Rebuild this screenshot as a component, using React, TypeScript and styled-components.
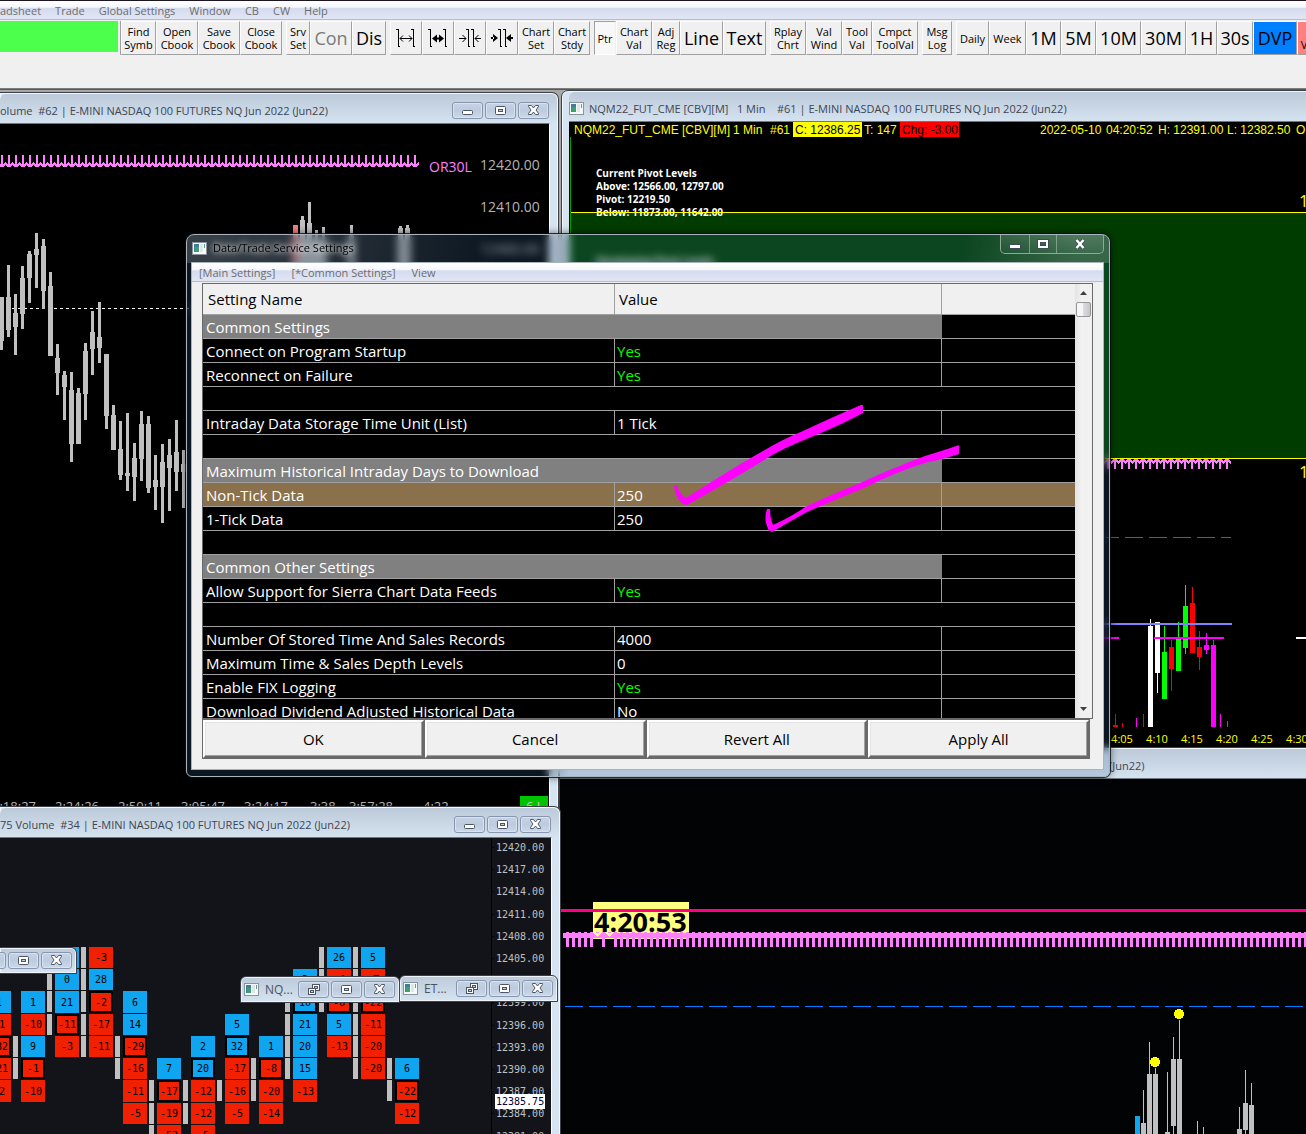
import React from "react";
import styled, { createGlobalStyle, css } from "styled-components";

const ui = `"Open Sans", "Noto Sans", sans-serif`;
const mono = `"DejaVu Sans Mono", "Liberation Mono", monospace`;
const arial = `"Liberation Sans", Arial, sans-serif`;

const GlobalStyle = createGlobalStyle`
  *, *::before, *::after { box-sizing: border-box; }
  body { margin: 0; background: #a7a7a7; font-family: ${ui}; font-size: 11px; }
  button { font: inherit; margin: 0; padding: 0; cursor: default; }
`;

/* ---------- Application shell ---------- */

const Shell = styled.main`
  display: flex;
  flex-direction: column;
  height: 100vh;
  overflow: hidden;
`;

const MenuBar = styled.nav<{ $inDialog?: boolean }>`
  display: flex;
  flex: none;
  align-items: center;
  gap: ${(p) => (p.$inDialog ? 16 : 14)}px;
  height: ${(p) => (p.$inDialog ? 19 : 20)}px;
  padding-left: ${(p) => (p.$inDialog ? 7 : 0)}px;
  padding-top: ${(p) => (p.$inDialog ? 0 : 1)}px;
  border-top: 1px solid ${(p) => (p.$inDialog ? "#ffffff" : "#1c1620")};
  border-bottom: 1px solid #b6bccc;
  background: linear-gradient(#ffffff 0, #f4f6fb 35%, #d5dbee 40%, #e1e6f6 100%);
`;

const MenuItem = styled.button`
  border: 0;
  background: none;
  color: #6d6d6d;
  font-size: 11px;
  line-height: 16px;
  white-space: nowrap;
`;

const Toolbar = styled.div`
  display: flex;
  flex: none;
  gap: 4px;
  height: 68px;
  padding-top: 1px;
  background: #f0f0f0;
  overflow: hidden;
`;

const StatusLight = styled.div`
  width: 118px;
  height: 31px;
  margin-right: -2px;
  flex: none;
  background: #4dff4d;
`;

const ToolGroup = styled.div<{ $first?: boolean }>`
  display: flex;
  flex: none;
  height: 34px;
  border-left: ${(p) => (p.$first ? "1px solid #a0a0a0" : "0")};
`;

const ToolButton = styled.button<{ $w: number; $big?: boolean; $tone?: string; $pressed?: boolean }>`
  width: ${(p) => p.$w}px;
  height: 34px;
  display: flex;
  align-items: center;
  justify-content: center;
  text-align: center;
  white-space: pre;
  overflow: hidden;
  font-size: ${(p) => (p.$big ? 18 : 11)}px;
  line-height: ${(p) => (p.$big ? 24 : 13)}px;
  color: #000;
  background: ${(p) => p.$tone ?? (p.$pressed ? "#f8f8f8" : "#f0f0f0")};
  border: 1px solid;
  border-color: ${(p) => (p.$pressed ? "#a0a0a0 #f0f0f0 #ffffff #a0a0a0" : "#fdfdfd #a0a0a0 #a0a0a0 #fdfdfd")};
  &:disabled { color: #7a7a7a; }
`;

const Desktop = styled.section`
  position: relative;
  flex: 1;
  overflow: hidden;
  border-top: 1px solid #7c7c7c;
  background: #a7a7a7;
  box-shadow: inset 0 1px 0 #5a5a5a;
`;

/* ---------- Chart windows ---------- */

type Box = { $x: number; $y: number; $w?: number; $h?: number };

const place = css<Box>`
  position: absolute;
  left: ${(p) => p.$x}px;
  top: ${(p) => p.$y - 89}px;
  ${(p) => (p.$w ? `width: ${p.$w}px;` : "right: -10px;")}
  ${(p) => (p.$h ? `height: ${p.$h}px;` : "bottom: -10px;")}
`;

const Frame = styled.article<Box & { $cutLeft?: boolean; $flush?: boolean }>`
  ${place}
  display: flex;
  flex-direction: column;
  border: 1px solid #3d4046;
  border-radius: ${(p) => (p.$cutLeft ? "0 7px 0 0" : "7px 7px 0 0")};
  padding: 0 ${(p) => (p.$flush ? 0 : 8)}px 0 ${(p) => (p.$cutLeft || p.$flush ? 0 : 7)}px;
  background: #d6e3f1;
  box-shadow: inset 0 0 0 1px #f2f7fc;
  ${(p) => p.$cutLeft && "border-left: 0;"}
`;

const TitleBar = styled.header`
  display: flex;
  flex: none;
  align-items: center;
  height: 30px;
  margin: 1px -7px -1px 0;
  padding: 2px 8px 0 0;
  color: #3c4652;
  background: linear-gradient(#bccad9, #d6e3f1);
  border-radius: 6px 6px 0 0;
`;

const Title = styled.h2<{ $indent?: number }>`
  flex: 1;
  margin: 0 0 0 ${(p) => p.$indent ?? 0}px;
  padding-top: 1px;
  font-size: 11px;
  line-height: 16px;
  font-weight: 400;
  white-space: pre;
`;

const Captions = styled.div`
  display: flex;
  gap: 2px;
`;

const CaptionButton = styled.button`
  display: grid;
  place-items: center;
  width: 31px;
  height: 17px;
  border: 1px solid #8796ae;
  border-radius: 3px;
  background: linear-gradient(#c6d3e3, #bccbdf 50%, #cbd9e9);
  box-shadow: inset 0 0 0 1px #d8e3f0;
`;

const Client = styled.div<{ $bg?: string }>`
  flex: 1;
  min-height: 0;
  border: solid;
  border-width: 1px 1px 0 0;
  border-color: #6f7780 #ffffff;
  background: ${(p) => p.$bg ?? "#000"};
`;

const Canvas = styled.svg<{ $font?: string }>`
  display: block;
  width: 100%;
  height: 100%;
  overflow: hidden;
  font-family: ${(p) => p.$font ?? ui};
`;

const MiniFrame = styled.article<Box & { $cutLeft?: boolean }>`
  ${place}
  display: flex;
  align-items: center;
  justify-content: flex-end;
  gap: 2px;
  padding: 0 4px 1px 3px;
  border: 1px solid #3d4046;
  border-radius: ${(p) => (p.$cutLeft ? "0 6px 0 0" : "6px 6px 0 0")};
  ${(p) => p.$cutLeft && "border-left: 0;"}
  background: linear-gradient(#bccad9, #d6e3f1);
  box-shadow: inset 0 0 0 1px #eef4fa;
  color: #4a545f;
`;

const MiniTitle = styled.h2`
  flex: 1;
  margin: 0 0 0 4px;
  padding-top: 2px;
  font-size: 12px;
  line-height: 16px;
  font-weight: 400;
`;

/* ---------- Dialog ---------- */

const Glass = styled.section<Box>`
  ${place}
  display: flex;
  flex-direction: column;
  padding: 0 5px 6px 4px;
  border: 1px solid #a9b3bb;
  border-radius: 8px 8px 6px 6px;
  background:
    linear-gradient(100deg, rgba(255, 255, 255, 0.18) 0, rgba(255, 255, 255, 0.13) 12%, rgba(255, 255, 255, 0) 34%) 0 0 / 100% 28px no-repeat,
    linear-gradient(100deg, rgba(255, 255, 255, 0) 84%, rgba(255, 255, 255, 0.18) 96%) 0 0 / 100% 28px no-repeat,
    rgba(60, 110, 160, 0.2);
  backdrop-filter: blur(4px);
  box-shadow: 0 0 0 1px rgba(10, 14, 20, 0.8), 0 0 8px rgba(0, 0, 0, 0.6);
`;

const GlassTitle = styled.header`
  display: flex;
  flex: none;
  align-items: flex-start;
  height: 27px;
  padding-left: 1px;
`;

const GlassLabel = styled.div`
  display: flex;
  flex: 1;
  align-items: center;
  gap: 6px;
  height: 26px;
`;

const GlassText = styled.h1`
  margin: 0;
  font-size: 11px;
  line-height: 16px;
  font-weight: 400;
  color: #000;
  text-shadow: 0 0 6px rgba(255, 255, 255, 0.8), 0 0 10px rgba(255, 255, 255, 0.7), 0 0 4px rgba(255, 255, 255, 0.5);
`;

const GlassCaptions = styled.div`
  display: flex;
  height: 19px;
  border: 1px solid #8fa898;
  border-top: 0;
  border-radius: 0 0 5px 5px;
  overflow: hidden;
`;

const GlassButton = styled.button<{ $w: number }>`
  display: grid;
  place-items: center;
  width: ${(p) => p.$w}px;
  border: 0;
  border-left: 1px solid rgba(170, 195, 178, 0.6);
  background: linear-gradient(rgba(255, 255, 255, 0.12), rgba(255, 255, 255, 0.02));
  &:first-child { border-left: 0; }
`;

const DialogBody = styled.div`
  display: flex;
  flex: 1;
  flex-direction: column;
  min-height: 0;
  border: 1px solid #a9b3bb;
  background: #f0f0f0;
`;

const Grid = styled.div`
  display: flex;
  flex: 1;
  min-height: 0;
  margin: 1px 10px 0;
  border: 1px solid #696969;
  background: #000;
`;

const TableView = styled.div`
  flex: 1;
  min-width: 0;
  overflow: hidden;
`;

const Table = styled.table`
  width: 100%;
  table-layout: fixed;
  border-collapse: separate;
  border-spacing: 0;
  color: #fff;
  font-size: 15px;
  line-height: 20px;
  text-align: left;
`;

const NameCol = styled.col`width: 412px;`;
const ValueCol = styled.col`width: 327px;`;

const Th = styled.th`
  height: 31px;
  padding: 0 4px;
  border-right: 1px solid #a0a0a0;
  border-bottom: 1px solid #a0a0a0;
  background: #f0f0f0;
  color: #000;
  font-weight: 400;
  &:first-child { padding-left: 5px; }
  &:last-child { border-right: 0; }
`;

const Td = styled.td<{ $fill?: string; $green?: boolean; $plain?: boolean }>`
  height: 24px;
  padding: 0 2px;
  border-right: ${(p) => (p.$plain ? "0" : "1px solid #a0a0a0")};
  border-bottom: 1px solid #a0a0a0;
  background: ${(p) => p.$fill ?? "#000"};
  color: ${(p) => (p.$green ? "#00ff00" : "#fff")};
  white-space: nowrap;
  &:first-child { padding-left: 3px; }
  &:last-child { border-right: 0; }
`;

const ScrollBar = styled.div`
  display: flex;
  flex: none;
  flex-direction: column;
  width: 17px;
  align-items: center;
  background: linear-gradient(90deg, #e4e4e4, #f2f2f2 40%, #f0f0f0);
`;

const ScrollArrow = styled.button`
  display: grid;
  place-items: center;
  width: 17px;
  height: 18px;
  border: 0;
  background: none;
`;

const Thumb = styled.div`
  width: 15px;
  height: 15px;
  margin-bottom: auto;
  border: 1px solid #979797;
  border-radius: 2px;
  background: linear-gradient(90deg, #f6f6f6 45%, #dcdce0 50%, #c4c4ca);
`;

const DialogActions = styled.div`
  display: grid;
  grid-template-columns: repeat(4, 1fr);
  flex: none;
  height: 40px;
  margin: 0 13px 10px 10px;
  border: 1px solid #696969;
  background: #696969;
  column-gap: 1px;
`;

const ActionButton = styled.button`
  border: 2px solid;
  border-color: #ffffff #696969 #696969 #ffffff;
  background: #f0f0f0;
  box-shadow: inset -1px -1px 0 #a0a0a0, inset 1px 1px 0 #e3e3e3;
  color: #000;
  font-size: 15px;
  line-height: 20px;
`;

const InkLayer = styled.svg`
  position: absolute;
  left: 0;
  top: 0;
  width: 100%;
  height: 100%;
  pointer-events: none;
`;

/* ---------- Icons ---------- */

const AppIcon = () => (
  <svg width="15" height="13" viewBox="0 0 15 13" shapeRendering="crispEdges" aria-hidden="true">
    <rect x="0" y="0" width="15" height="13" fill="#8b949b" />
    <rect x="1" y="1" width="13" height="11" fill="#f7fafa" />
    <rect x="2" y="2" width="5" height="8" fill="#3f7f9c" />
    <rect x="3" y="5" width="4" height="5" fill="#3fa06f" />
    <rect x="8" y="2" width="3" height="8" fill="#dfe6e6" />
    <rect x="12" y="2" width="1" height="4" fill="#5f96a8" />
  </svg>
);

const MinIcon = () => (
  <svg width="13" height="9" viewBox="0 0 13 9" aria-hidden="true">
    <rect x="1.5" y="4.5" width="10" height="4" rx="1" fill="#fff" stroke="#4c5564" />
  </svg>
);
const MaxIcon = () => (
  <svg width="11" height="9" viewBox="0 0 11 9" aria-hidden="true">
    <rect x="0.5" y="0.5" width="10" height="8" rx="1" fill="#fff" stroke="#4c5564" />
    <rect x="3.5" y="3.5" width="4" height="2" fill="#c2d0e0" stroke="#4c5564" />
  </svg>
);
const RestoreIcon = () => (
  <svg width="12" height="11" viewBox="0 0 12 11" aria-hidden="true">
    <rect x="4.5" y="0.5" width="7" height="6" fill="#fff" stroke="#4c5564" />
    <rect x="6.5" y="2.5" width="3" height="2" fill="#c2d0e0" stroke="#4c5564" />
    <rect x="0.5" y="4.5" width="7" height="6" fill="#fff" stroke="#4c5564" />
    <rect x="2.5" y="6.5" width="3" height="2" fill="#c2d0e0" stroke="#4c5564" />
  </svg>
);
const CloseIcon = () => (
  <svg width="13" height="10" viewBox="0 0 13 10" aria-hidden="true">
    <path d="M1.500 .5h3l2 2.500 2-2.500h3v1l-2.500 3.500 2.500 3.500v1h-3l-2-2.500-2 2.500h-3v-1l2.500-3.500-2.500-3.500z" fill="#fff" stroke="#4c5564" />
  </svg>
);

const Spacing = ({ inward, bold }: { inward?: boolean; bold?: boolean }) => (
  <svg width="24" height="22" viewBox="0 0 24 22" fill="none" stroke="#000" aria-hidden="true">
    {inward ? (
      <>
        <path d="M8 2.500h2.500v17M10 19.500h2M13 2.500h2.500v17M15 19.500h2" shapeRendering="crispEdges" />
        {bold ? (
          <path d="M3 7v8l5-4zM21 7v8l-5-4zM1 10h3v2h-3zM20 10h3v2h-3z" fill="#000" stroke="none" />
        ) : (
          <path d="M1 11.500h7M4.500 8l3.500 3.500-3.500 3.500M23 11.500h-6M20.500 8l-3.500 3.500 3.500 3.500" />
        )}
      </>
    ) : (
      <>
        <path d="M2 2.500h2.500v17M4 19.500h2M17 2.500h2.500v17M19 19.500h2" shapeRendering="crispEdges" />
        {bold ? (
          <path d="M6 11.500l5-4v3h2v-3l5 4-5 4v-3h-2v3z" fill="#000" stroke="none" />
        ) : (
          <path d="M6 11.500h12M9 8.500l-3 3 3 3M15 8.500l3 3-3 3" />
        )}
      </>
    )}
  </svg>
);

const WindowButtons = ({ restore }: { restore?: boolean }) => (
  <Captions>
    <CaptionButton aria-label={restore ? "Restore" : "Minimize"}>{restore ? <RestoreIcon /> : <MinIcon />}</CaptionButton>
    <CaptionButton aria-label="Maximize"><MaxIcon /></CaptionButton>
    <CaptionButton aria-label="Close"><CloseIcon /></CaptionButton>
  </Captions>
);

/* ---------- Toolbar data ---------- */

type Tool = { t?: string; w: number; big?: boolean; off?: boolean; tone?: string; down?: boolean; icon?: [boolean, boolean]; label?: string };

const toolGroups: Tool[][] = [
  [{ t: "Find\nSymb", w: 35 }, { t: "Open\nCbook", w: 42 }, { t: "Save\nCbook", w: 42 }, { t: "Close\nCbook", w: 42 }],
  [{ t: "Srv\nSet", w: 24 }, { t: "Con", w: 42, big: true, off: true }, { t: "Dis", w: 34, big: true }],
  [
    { w: 32, icon: [false, false], label: "Increase bar spacing" },
    { w: 32, icon: [false, true], label: "Increase bar width" },
    { w: 32, icon: [true, false], label: "Decrease bar spacing" },
    { w: 32, icon: [true, true], label: "Decrease bar width" },
    { t: "Chart\nSet", w: 36 },
    { t: "Chart\nStdy", w: 36 },
  ],
  [{ t: "Ptr", w: 22, down: true }, { t: "Chart\nVal", w: 36 }, { t: "Adj\nReg", w: 28 }, { t: "Line", w: 43, big: true }, { t: "Text", w: 43, big: true }],
  [{ t: "Rplay\nChrt", w: 36 }, { t: "Val\nWind", w: 36 }, { t: "Tool\nVal", w: 30 }, { t: "Cmpct\nToolVal", w: 46 }],
  [{ t: "Msg\nLog", w: 30 }],
  [
    { t: "Daily", w: 33 }, { t: "Week", w: 37 },
    { t: "1M", w: 35, big: true }, { t: "5M", w: 35, big: true }, { t: "10M", w: 45, big: true }, { t: "30M", w: 45, big: true },
    { t: "1H", w: 31, big: true }, { t: "30s", w: 36, big: true }, { t: "DVP", w: 44, big: true, tone: "#0080ff" },
    { t: " \nV", w: 14, tone: "#ff8080" },
  ],
];

/* ---------- Chart data ---------- */

// [wick top, wick bottom, body top, body bottom], one bar every 7px
const volumeBars = [
  [297, 350, 297, 341], [265, 337, 297, 330], [294, 355, 313, 327], [266, 329, 278, 314], [251, 303, 254, 278],
  [233, 288, 249, 255], [239, 309, 246, 291], [272, 356, 286, 356], [344, 395, 358, 373], [371, 420, 375, 387],
  [372, 462, 390, 444], [388, 444, 393, 444], [343, 420, 351, 394], [311, 375, 332, 349], [302, 363, 337, 348],
  [354, 429, 354, 416], [405, 450, 415, 450], [421, 480, 449, 475], [413, 491, 473, 476], [443, 501, 458, 477],
  [411, 481, 424, 459], [416, 493, 424, 488], [455, 510, 480, 487], [444, 523, 462, 487], [439, 511, 455, 468],
  [420, 491, 452, 472], [450, 508, 464, 472],
];
const peakBars: [number, number, number, string][] = [
  [42, 225, 225, "#f08080"], [43, 216, 220, "#c0c0c0"], [44, 202, 223, "#c0c0c0"], [45, 230, 242, "#c0c0c0"],
  [46, 227, 240, "#c0c0c0"], [50, 225, 236, "#c0c0c0"], [57, 226, 228, "#c0c0c0"], [58, 225, 228, "#c0c0c0"],
];
const volumeTimes: [number, string][] = [
  [-8, "2:18:27"], [55, "2:24:26"], [118, "2:50:11"], [181, "3:05:47"], [244, "3:24:17"], [310, "3:38"], [349, "3:57:28"], [423, "4:22"],
];

const VolumeChart = () => (
  <Canvas shapeRendering="crispEdges">
    <g transform="translate(0 -124)">
      <line x1="0" x2="560" y1="308.500" y2="308.500" stroke="#fff" strokeDasharray="3 3" />
      {volumeBars.map(([a, b, c, d], i) => (
        <g key={i} fill="#c0c0c0">
          <rect x={i * 7} y={a} width="3" height={b - a} />
          <rect x={i * 7 - 1} y={c} width="5" height={d - c} />
        </g>
      ))}
      {peakBars.map(([i, a, c, fill]) => (
        <g key={i} fill={fill}>
          <rect x={i * 7} y={a} width="3" height={270 - a} />
          <rect x={i * 7 - 1} y={c} width="5" height={270 - c} />
        </g>
      ))}
      {Array.from({ length: 60 }, (_, i) => (
        <g key={i}>
          <rect x={i * 7 + 1} y="155" width="2" height="11" fill="#ff80ff" />
          <path d={`M${i * 7 - 2} 163l4 3.500 4-3.500`} fill="none" stroke="#ff80ff" strokeWidth="2" />
        </g>
      ))}
      <text x="429" y="172" fontSize="14" fill="#ff80ff">OR30L</text>
      {["12420.00", "12410.00", "12400.00"].map((t, i) => (
        <text key={t} x="480" y={170 + i * 42} fontSize="14" fill="#b4b4b4">{t}</text>
      ))}
      {volumeTimes.map(([x, t]) => (
        <text key={x} x={x} y="811" fontSize="13" fill="#b4b4b4">{t}</text>
      ))}
      <rect x="520" y="796" width="28" height="16" fill="#00c400" />
      <text x="526" y="811" fontSize="13" fill="#c8c8c8">6 J</text>
    </g>
  </Canvas>
);

const LIME = "#00ff00", RED = "#ff0000", MAG = "#ff00ff", WHITE = "#ffffff";
// [x, wick top, wick bottom, body top, body bottom, colour]
const minuteBars: [number, number, number, number, number, string][] = [
  [1115, 714, 727, 725, 727, RED], [1122, 723, 727, 0, 0, RED], [1136, 718, 727, 0, 0, MAG], [1143, 714, 727, 0, 0, RED],
  [1150, 619, 727, 626, 727, WHITE], [1157, 622, 693, 622, 673, WHITE], [1164, 626, 699, 652, 699, LIME],
  [1171, 640, 691, 647, 669, RED], [1178, 622, 671, 639, 671, LIME], [1185, 585, 654, 606, 648, LIME],
  [1192, 587, 653, 603, 653, RED], [1199, 631, 670, 647, 657, RED], [1206, 633, 654, 645, 650, MAG],
  [1213, 640, 727, 645, 727, MAG], [1220, 714, 727, 0, 0, MAG], [1227, 721, 727, 0, 0, MAG],
];

const MinuteChart = () => (
  <Canvas shapeRendering="crispEdges">
    <g transform="translate(-569 -122)">
      <g fontFamily={arial} fontSize="12" fill="#ffff00">
        <text x="574" y="134">NQM22_FUT_CME [CBV][M]</text>
        <text x="733" y="134">1 Min</text>
        <text x="770" y="134">#61</text>
        <rect x="793" y="122" width="69" height="15" />
        <text x="795" y="134" fill="#000">C: 12386.25</text>
        <text x="864" y="134">T: 147</text>
        <rect x="900" y="122" width="59" height="15" fill="#ff0000" />
        <text x="902" y="134" fill="#000">Chg: -3.00</text>
        <text x="1040" y="134">2022-05-10</text>
        <text x="1106" y="134">04:20:52</text>
        <text x="1158" y="134">H: 12391.00</text>
        <text x="1227" y="134">L: 12382.50</text>
        <text x="1296" y="134">O</text>
      </g>
      <rect x="570" y="213" width="800" height="245" fill="#003c00" />
      <rect x="570" y="137" width="1" height="600" fill="#00a000" />
      <g fill="#fff" fontSize="10" fontWeight="700">
        <text x="596" y="177">Current Pivot Levels</text>
        <text x="596" y="190">Above: 12566.00, 12797.00</text>
        <text x="596" y="203">Pivot: 12219.50</text>
        <text x="596" y="216">Below: 11873.00, 11642.00</text>
        <text x="596" y="265">Developing Pivot Levels</text>
      </g>
      <rect x="571" y="212" width="800" height="1" fill="#ffff00" />
      <rect x="571" y="458" width="800" height="1" fill="#ffff00" />
      <g fill="#ffff00" fontSize="17">
        <text x="1299" y="207">1</text>
        <text x="1299" y="478">1</text>
      </g>
      {Array.from({ length: 18 }, (_, i) => (
        <g key={i}>
          <rect x={1107 + i * 7} y="459" width="2" height="10" fill="#ff80ff" />
          <path d={`M${1104 + i * 7} 463l4-3.500 4 3.500`} fill="none" stroke="#ff80ff" strokeWidth="2" />
        </g>
      ))}
      <line x1="1101" x2="1231" y1="537.500" y2="537.500" stroke="#0a6fe0" strokeDasharray="18 6" />
      <rect x="1100" y="637" width="19" height="2" fill={MAG} />
      {minuteBars.map(([x, a, b, c, d, fill]) => (
        <g key={x} fill={fill}>
          <rect x={x} y={a} width="1" height={b - a} />
          <rect x={x - 2} y={c} width="5" height={d - c} />
        </g>
      ))}
      <rect x="1100" y="623" width="132" height="2" fill="#8080ff" />
      <rect x="1154" y="637" width="70" height="2" fill={MAG} />
      <rect x="1296" y="637" width="40" height="2" fill="#fff" />
      {["4:05", "4:10", "4:15", "4:20", "4:25", "4:30"].map((t, i) => (
        <text key={t} x={1122 + i * 35} y="743" fontSize="11" textAnchor="middle" fill="#ffff00">{t}</text>
      ))}
    </g>
  </Canvas>
);

// [x, wick top, body top, body bottom]
const sessionBars: [number, number, number, number][] = [
  [1143, 1090, 1123, 1150], [1149, 1042, 1074, 1150], [1155, 1068, 1074, 1150], [1167, 1072, 1132, 1150],
  [1173, 1037, 1059, 1126], [1179, 1020, 1059, 1150], [1197, 1121, 1150, 1150], [1203, 1127, 1150, 1150],
  [1239, 1107, 1129, 1150], [1245, 1070, 1103, 1130], [1251, 1083, 1105, 1150],
];

const SessionChart = () => (
  <Canvas shapeRendering="crispEdges">
    <g transform="translate(-560 -779)">
      <rect x="593" y="902" width="96" height="37" fill="#ffff80" />
      <text x="594" y="932" fontSize="27" fontWeight="700" fill="#000">4:20:53</text>
      <rect x="560" y="909" width="800" height="3" fill="#ff0080" />
      <rect x="563" y="933" width="800" height="5" fill="#ff80ff" />
      {Array.from({ length: 126 }, (_, i) => (
        <g key={i} fill="#ff80ff">
          <rect x={566 + i * 6} y="932" width="3" height="1" />
          {i !== 5 && i !== 7 && <rect x={566 + i * 6} y="938" width="3" height="9" />}
          {(i === 5 || i === 7) && <path d={`M${563 + i * 6} 933h8l-4 4z`} fill="#ffff80" />}
        </g>
      ))}
      <line x1="565" x2="1400" y1="1006.500" y2="1006.500" stroke="#0a7cff" strokeDasharray="18 6" />
      <rect x="1135" y="1116" width="5" height="40" fill="#10a5f0" />
      {sessionBars.map(([x, a, c, d]) => (
        <g key={x} fill="#c0c0c0">
          <rect x={x} y={a} width="1" height={1150 - a} />
          <rect x={x - 2} y={c} width="5" height={d - c} />
        </g>
      ))}
      <circle cx="1155" cy="1062" r="5" fill="#ffff00" />
      <circle cx="1179" cy="1014" r="5" fill="#ffff00" />
    </g>
  </Canvas>
);

// Delta cells: first row index, then values; "b" blue, "r" red, "*" marks the outlined cell
const footprint: { start: number; cells: string[]; range: [number, number] }[] = [
  { start: 2, cells: ["b1", "r-1", "r-32*", "r-21", "r-2"], range: [0, 0] },
  { start: 2, cells: ["b1", "r-10", "b9", "r-1*", "r-10"], range: [4, 6] },
  { start: 0, cells: ["b4", "b0", "b21", "r-11*", "r-3"], range: [1, 4] },
  { start: 0, cells: ["r-3", "b28", "r-2*", "r-17", "r-11"], range: [0, 5] },
  { start: 2, cells: ["b6", "b14", "r-29*", "r-16", "r-11", "r-5"], range: [4, 6] },
  { start: 5, cells: ["b7", "r-17*", "r-19", "r-53"], range: [6, 9] },
  { start: 4, cells: ["b2", "b20*", "r-12", "r-12", "r-5"], range: [6, 8] },
  { start: 3, cells: ["b5", "b32*", "r-17", "r-16", "r-5"], range: [6, 7] },
  { start: 4, cells: ["b1", "r-8*", "r-20", "r-14"], range: [5, 7] },
  { start: 1, cells: ["b3", "b16*", "b21", "b20", "b15", "r-13"], range: [2, 6] },
  { start: 0, cells: ["b26", "r-4", "r-6*", "b5", "r-13"], range: [0, 3] },
  { start: 0, cells: ["b5", "r-7", "r-22*", "r-11", "r-20", "r-20"], range: [0, 6] },
  { start: 5, cells: ["b6", "r-22*", "r-12"], range: [5, 7] },
];
const rowTop = [947, 969, 991, 1014, 1036, 1058, 1080, 1103, 1125, 1147];

const FootprintChart = () => (
  <Canvas shapeRendering="crispEdges" $font={mono}>
    <g transform="translate(0 -838)" fontSize="10">
      {footprint.map(({ start, cells, range }, col) => {
        const x = col * 34 - 13;
        return (
          <g key={col}>
            {rowTop.slice(range[0], range[1]).map((y) => (
              <rect key={y} x={x - 8} y={y} width="5" height="21" fill="#c0c0c0" />
            ))}
            {cells.map((cell, i) => {
              const y = rowTop[start + i];
              const h = rowTop[start + i + 1] - y - 1;
              const marked = cell.endsWith("*");
              return (
                <g key={i}>
                  <rect x={x} y={y} width="24" height={h} fill={cell[0] === "b" ? "#10a5f0" : "#f02000"} />
                  {marked && <rect x={x + 1} y={y + 1} width="22" height={h - 2} fill="none" stroke="#000" strokeWidth="2" />}
                  <text x={x + 12} y={y + h - 7} textAnchor="middle" fill="#000">{cell.slice(1).replace("*", "")}</text>
                </g>
              );
            })}
          </g>
        );
      })}
      <rect x="491" y="838" width="1" height="400" fill="#000" />
      {Array.from({ length: 14 }, (_, i) => {
        const y = 847 + Math.round(i * 22.2);
        return (
          <g key={i}>
            <rect x="491" y={y} width="3" height="1" fill="#000" />
            <text x="496" y={y + 4} fill="#c0c0c0">{`${12420 - i * 3}.00`}</text>
          </g>
        );
      })}
      <rect x="495" y="1094" width="50" height="15" fill="#fff" />
      <text x="496" y="1105" fill="#00003c">12385.75</text>
    </g>
  </Canvas>
);

/* ---------- Settings table ---------- */

type Row = { kind: "group" | "row" | "blank"; name?: string; value?: string; selected?: boolean };
const blank: Row = { kind: "blank" };
const rows: Row[] = [
  { kind: "group", name: "Common Settings" },
  { kind: "row", name: "Connect on Program Startup", value: "Yes" },
  { kind: "row", name: "Reconnect on Failure", value: "Yes" },
  blank,
  { kind: "row", name: "Intraday Data Storage Time Unit (List)", value: "1 Tick" },
  blank,
  { kind: "group", name: "Maximum Historical Intraday Days to Download" },
  { kind: "row", name: "Non-Tick Data", value: "250", selected: true },
  { kind: "row", name: "1-Tick Data", value: "250" },
  blank,
  { kind: "group", name: "Common Other Settings" },
  { kind: "row", name: "Allow Support for Sierra Chart Data Feeds", value: "Yes" },
  blank,
  { kind: "row", name: "Number Of Stored Time And Sales Records", value: "4000" },
  { kind: "row", name: "Maximum Time & Sales Depth Levels", value: "0" },
  { kind: "row", name: "Enable FIX Logging", value: "Yes" },
  { kind: "row", name: "Download Dividend Adjusted Historical Data", value: "No" },
];

const SettingsRow = ({ row }: { row: Row }) => {
  if (row.kind === "blank") return <tr><Td colSpan={3} /></tr>;
  if (row.kind === "group")
    return <tr><Td colSpan={2} $fill="#808080" $plain>{row.name}</Td><Td /></tr>;
  const fill = row.selected ? "#8a714b" : undefined;
  return (
    <tr>
      <Td $fill={fill}>{row.name}</Td>
      <Td $fill={fill} $green={row.value === "Yes"}>{row.value}</Td>
      <Td $fill={fill} />
    </tr>
  );
};

const SettingsDialog = () => (
  <Glass $x={186} $y={234} $w={924} $h={543} role="dialog" aria-label="Data/Trade Service Settings">
    <GlassTitle>
      <GlassLabel><AppIcon /><GlassText>Data/Trade Service Settings</GlassText></GlassLabel>
      <GlassCaptions>
        <GlassButton $w={28} aria-label="Minimize">
          <svg width="12" height="10" viewBox="0 0 12 10"><rect x="0.500" y="5.500" width="11" height="4" fill="#fff" stroke="#3c4a52" /></svg>
        </GlassButton>
        <GlassButton $w={27} aria-label="Maximize">
          <svg width="12" height="10" viewBox="0 0 12 10"><rect x="2" y="1.500" width="8" height="6" fill="none" stroke="#3c4a52" strokeWidth="4" /><rect x="2" y="2" width="8" height="6" fill="none" stroke="#fff" strokeWidth="2" /></svg>
        </GlassButton>
        <GlassButton $w={47} aria-label="Close">
          <svg width="12" height="10" viewBox="0 0 12 10" fill="none"><path d="M2.500 1l7 8M9.500 1l-7 8" stroke="#3c4a52" strokeWidth="4" /><path d="M2.500 1l7 8M9.500 1l-7 8" stroke="#fff" strokeWidth="2.500" /></svg>
        </GlassButton>
      </GlassCaptions>
    </GlassTitle>
    <DialogBody>
      <MenuBar $inDialog>
        <MenuItem>[Main Settings]</MenuItem>
        <MenuItem>[*Common Settings]</MenuItem>
        <MenuItem>View</MenuItem>
      </MenuBar>
      <Grid>
        <TableView>
          <Table>
            <colgroup><NameCol /><ValueCol /><col /></colgroup>
            <thead><tr><Th>Setting Name</Th><Th>Value</Th><Th aria-label="Notes" /></tr></thead>
            <tbody>{rows.map((row, i) => <SettingsRow key={i} row={row} />)}</tbody>
          </Table>
        </TableView>
        <ScrollBar>
          <ScrollArrow aria-label="Scroll up"><svg width="7" height="4" viewBox="0 0 7 4"><path d="M0 4l3.500-4L7 4z" fill="#404040" /></svg></ScrollArrow>
          <Thumb />
          <ScrollArrow aria-label="Scroll down"><svg width="7" height="4" viewBox="0 0 7 4"><path d="M0 0h7L3.500 4z" fill="#404040" /></svg></ScrollArrow>
        </ScrollBar>
      </Grid>
      <DialogActions>
        <ActionButton>OK</ActionButton>
        <ActionButton>Cancel</ActionButton>
        <ActionButton>Revert All</ActionButton>
        <ActionButton>Apply All</ActionButton>
      </DialogActions>
    </DialogBody>
  </Glass>
);

const contract = "E-MINI NASDAQ 100 FUTURES NQ Jun 2022 (Jun22)";

export default function App() {
  return (
    <>
      <GlobalStyle />
      <Shell>
        <MenuBar>
          {["adsheet", "Trade", "Global Settings", "Window", "CB", "CW", "Help"].map((m) => <MenuItem key={m}>{m}</MenuItem>)}
        </MenuBar>
        <Toolbar>
          <StatusLight />
          {toolGroups.map((group, g) => (
            <ToolGroup key={g} $first={g === 0}>
              {group.map((b, i) => (
                <ToolButton key={i} $w={b.w} $big={b.big} $tone={b.tone} $pressed={b.down} disabled={b.off} aria-label={b.label}>
                  {b.icon ? <Spacing inward={b.icon[0]} bold={b.icon[1]} /> : b.t}
                </ToolButton>
              ))}
            </ToolGroup>
          ))}
        </Toolbar>
        <Desktop>
          <Frame $x={0} $y={92} $w={559} $cutLeft>
            <TitleBar><Title>{`olume  #62 | ${contract}`}</Title><WindowButtons /></TitleBar>
            <Client><VolumeChart /></Client>
          </Frame>
          <Frame $x={559} $y={747} $flush>
            <TitleBar><Title $indent={549}>(Jun22)</Title></TitleBar>
            <Client $bg="#020305"><SessionChart /></Client>
          </Frame>
          <Frame $x={561} $y={90} $h={658}>
            <TitleBar><AppIcon /><Title $indent={5}>{`NQM22_FUT_CME [CBV][M]   1 Min    #61 | ${contract}`}</Title></TitleBar>
            <Client><MinuteChart /></Client>
          </Frame>
          <Frame $x={0} $y={806} $w={561} $cutLeft>
            <TitleBar><Title>{`75 Volume  #34 | ${contract}`}</Title><WindowButtons /></TitleBar>
            <Client $bg="#131419"><FootprintChart /></Client>
          </Frame>
          <MiniFrame $x={0} $y={947} $w={77} $h={27} $cutLeft><WindowButtons /></MiniFrame>
          <MiniFrame $x={240} $y={976} $w={160} $h={27}><AppIcon /><MiniTitle>NQ...</MiniTitle><WindowButtons restore /></MiniFrame>
          <MiniFrame $x={399} $y={975} $w={159} $h={27}><AppIcon /><MiniTitle>ET...</MiniTitle><WindowButtons restore /></MiniFrame>
          <SettingsDialog />
          <InkLayer aria-hidden="true">
            <g transform="translate(0 -89)" fill="#ff00ff">
              <path d="M674 485h3q1 7 9 13 45-29 77-47 20-12 40-20 32-15 58-26h2v8q-20 11-54 25-25 10-40 19-30 19-82 48l-4-1q-8-6-9-19z" />
              <path d="M767 509h3q0 9 3 16 16-7 34-19 28-13 53-23 35-16 65-27 20-6 34-11v9q-18 6-31 8-30 9-64 26-32 13-57 24-18 10-35 20l-3-1q-6-12-2-22z" />
            </g>
          </InkLayer>
        </Desktop>
      </Shell>
    </>
  );
}
